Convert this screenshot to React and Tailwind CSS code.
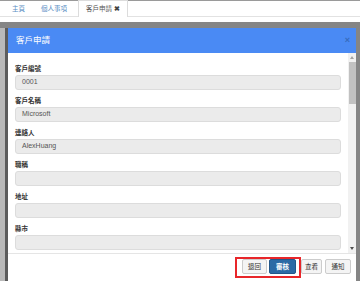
import React from 'react';

const fields = [
  { label: '客戶編號', value: '0001' },
  { label: '客戶名稱', value: 'Microsoft' },
  { label: '連絡人', value: 'AlexHuang' },
  { label: '職稱', value: '' },
  { label: '地址', value: '' },
  { label: '縣市', value: '' },
];

function Field({ label, value }) {
  return (
    <div className="mb-[7px]">
      <div className="text-[6.5px] leading-[8px] font-bold text-[#333] mb-[2px]">{label}</div>
      <div className="h-[15px] rounded-[3px] border border-[#dcdcdc] bg-[#ebebeb] px-[6px] flex items-center text-[7px] text-[#555]">
        {value}
      </div>
    </div>
  );
}

function Btn({ children, className = '' }) {
  return (
    <button className={`h-[15px] flex items-center justify-center rounded-[2px] border text-[6.5px] ${className}`}>
      {children}
    </button>
  );
}

export default function App() {
  return (
    <div
      className="w-[360px] h-[281px] overflow-hidden flex flex-col bg-white"
      style={{ fontFamily: "'Liberation Sans', 'Noto Sans CJK TC', sans-serif" }}
    >
      {/* tab bar */}
      <div className="h-[22px] border-t border-[#9a9a9a] shrink-0">
        <div className="h-[16px] flex items-end border-b border-[#e2e2e2] pl-[6px]">
          <div className="h-full flex items-center px-[6px] text-[6.5px] text-[#5b8ec4]">主頁</div>
          <div className="h-full flex items-center px-[7px] ml-[3px] text-[6.5px] text-[#5b8ec4]">個人事項</div>
          <div className="h-[17px] -mb-px ml-[4px] w-[50px] flex items-center justify-center gap-[2px] border border-b-0 border-[#dcdcdc] bg-white text-[6.5px] text-[#555]">
            <span>客戶申請</span>
            <span className="text-[7px] font-bold text-[#444]">✖</span>
          </div>
        </div>
      </div>

      {/* backdrop */}
      <div className="flex-1 flex flex-col bg-[#858585] pt-[6px] min-h-0">
        <div className="flex-1 flex min-h-0">
          <div className="w-[5px] bg-[#b9b9b9]"></div>
          <div className="w-[3px] bg-[#5c5c5c]"></div>

          {/* modal */}
          <div className="flex-1 flex flex-col bg-white min-w-0">
            <div className="h-[25px] shrink-0 bg-[#4a8af4] flex items-center justify-between pl-[8px] pr-[6px]">
              <span className="text-[8.5px] text-white">客戶申請</span>
              <span className="text-[9px] font-bold text-[#2f5fa6] opacity-70 leading-none">×</span>
            </div>

            <div className="h-[200px] shrink-0 flex">
              <div className="flex-1 pt-[12px] pl-[7px] pr-[7px] overflow-hidden">
                {fields.map((f) => (
                  <Field key={f.label} label={f.label} value={f.value} />
                ))}
              </div>
              <div className="w-[8px] bg-[#f1f1f1] flex flex-col items-center">
                <div className="h-[9px] flex items-center justify-center">
                  <div className="w-0 h-0 border-l-[2.5px] border-r-[2.5px] border-b-[3px] border-l-transparent border-r-transparent border-b-[#a3a3a3]"></div>
                </div>
                <div className="w-[7px] h-[42px] bg-[#c1c1c1]"></div>
                <div className="flex-1"></div>
                <div className="h-[9px] flex items-center justify-center">
                  <div className="w-0 h-0 border-l-[2.5px] border-r-[2.5px] border-t-[3px] border-l-transparent border-r-transparent border-t-[#505050]"></div>
                </div>
              </div>
            </div>

            <div className="border-t border-[#e5e5e5] flex-1 flex items-start justify-end pt-[3px] pr-[5px]">
              <div className="flex gap-[2px] border-2 border-[#e8262a] pl-[5px] pr-[3px] pb-[2px]">
                <Btn className="w-[25px] bg-[#f4f4f4] border-[#cccccc] text-[#333]">退回</Btn>
                <Btn className="w-[27px] bg-[#2c6aa5] border-[#22578a] text-white font-bold">審核</Btn>
              </div>
              <Btn className="w-[21px] mt-[2px] bg-[#f4f4f4] border-[#cccccc] text-[#333]">查看</Btn>
              <Btn className="w-[26px] mt-[2px] ml-[3px] bg-[#f4f4f4] border-[#cccccc] text-[#333]">通知</Btn>
            </div>
          </div>

          <div className="w-[4px]"></div>
        </div>
      </div>
    </div>
  );
}
